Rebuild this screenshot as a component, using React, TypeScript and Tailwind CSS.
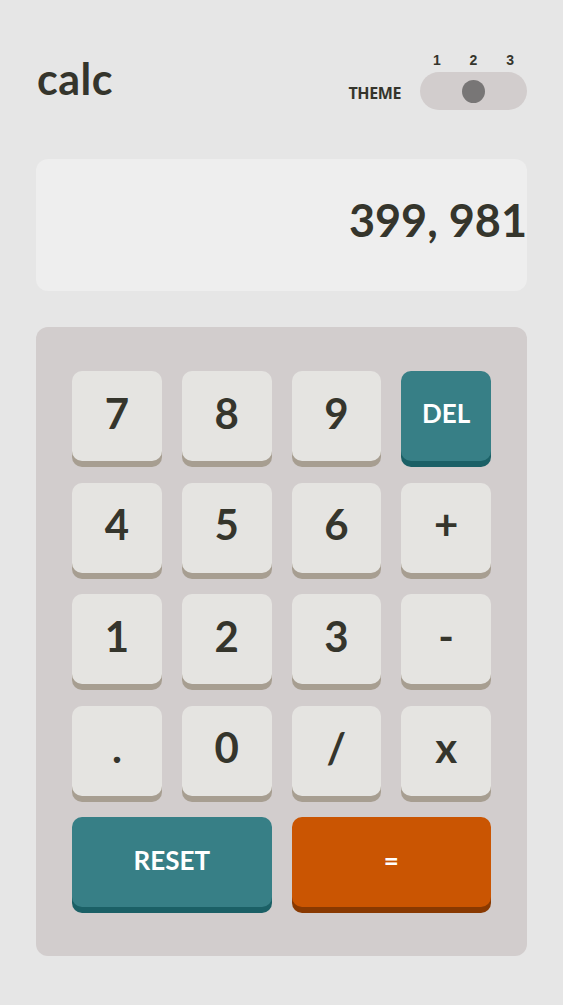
const keys: { label: string; kind?: "del" }[] = [
  { label: "7" },
  { label: "8" },
  { label: "9" },
  { label: "DEL", kind: "del" },
  { label: "4" },
  { label: "5" },
  { label: "6" },
  { label: "+" },
  { label: "1" },
  { label: "2" },
  { label: "3" },
  { label: "-" },
  { label: "." },
  { label: "0" },
  { label: "/" },
  { label: "x" },
];

function Key({ label, kind }: { label: string; kind?: "del" }) {
  if (kind === "del") {
    return (
      <button className="h-[90px] rounded-[10px] bg-[#377f86] pb-[6px] text-[26px] font-bold text-white shadow-[0_6px_0_#1b6066]">
        {label}
      </button>
    );
  }
  return (
    <button className="h-[90px] rounded-[10px] bg-[#e5e4e1] pb-[6px] text-[42px] font-bold text-[#35352c] shadow-[0_6px_0_#a79e91]">
      {label}
    </button>
  );
}

export default function App() {
  return (
    <div
      className="min-h-screen bg-[#e6e6e6] px-[36px] pt-[52px] pb-[49px]"
      style={{ fontFamily: "Lato, 'Noto Sans', sans-serif" }}
    >
      <header className="flex items-start justify-between">
        <h1 className="ml-[1px] mt-[5px] text-[43px] font-bold leading-none tracking-[0.5px] text-[#35352c]">
          calc
        </h1>
        <div className="flex items-end gap-[19px]">
          <span className="mb-[5px] font-['Open_Sans',sans-serif] text-[16px] font-bold tracking-tight text-[#35352c]">
            THEME
          </span>
          <div className="flex flex-col">
            <div className="mb-[4px] flex justify-between px-[13px] font-['Liberation_Sans',sans-serif] text-[14px] font-bold leading-[16px] text-[#35352c]">
              <span>1</span>
              <span>2</span>
              <span>3</span>
            </div>
            <div className="flex h-[38px] w-[107px] items-center justify-center rounded-full bg-[#d2cdcd]">
              <div className="h-[23px] w-[23px] rounded-full bg-[#787676]" />
            </div>
          </div>
        </div>
      </header>

      <div className="mt-[49px] flex h-[132px] items-center justify-end overflow-hidden rounded-[12px] bg-[#eeeeee]">
        <span className="mb-[9px] text-[45px] font-bold text-[#35352c]">
          399, 981
        </span>
      </div>

      <div className="mt-[36px] rounded-[12px] bg-[#d2cdcd] px-[36px] pt-[44px] pb-[49px]">
        <div className="grid grid-cols-4 gap-x-[20px] gap-y-[21.5px]">
          {keys.map((k) => (
            <Key key={k.label} label={k.label} kind={k.kind} />
          ))}
          <button className="col-span-2 h-[90px] rounded-[10px] bg-[#377f86] pb-[4px] text-[26px] font-bold text-white shadow-[0_6px_0_#1b6066]">
            RESET
          </button>
          <button className="col-span-2 h-[90px] rounded-[10px] bg-[#ca5502] pb-[4px] text-[26px] font-bold text-white shadow-[0_6px_0_#893901]">
            =
          </button>
        </div>
      </div>
    </div>
  );
}
